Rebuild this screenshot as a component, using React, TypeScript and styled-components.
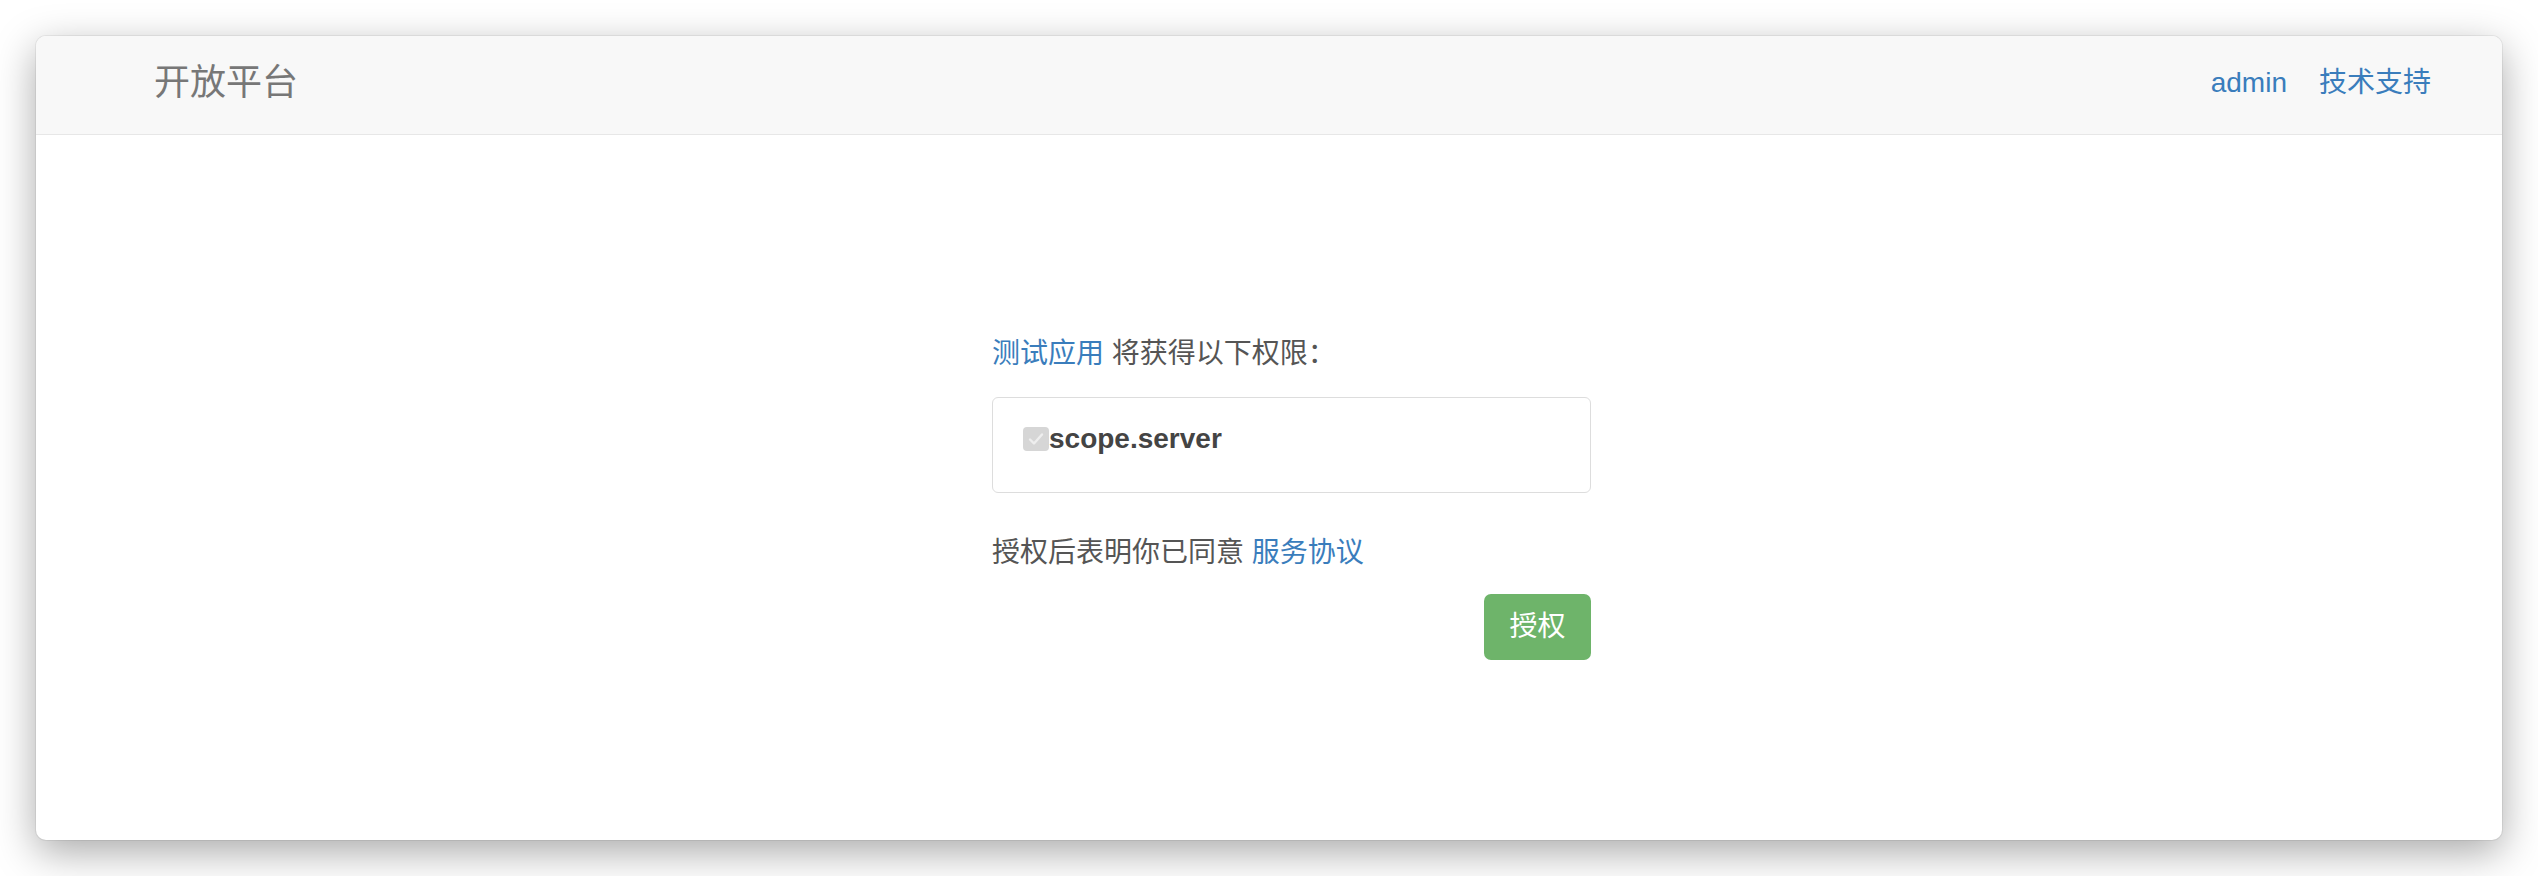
import React from "react";
import styled, { createGlobalStyle } from "styled-components";

const GlobalStyle = createGlobalStyle`
  html, body {
    margin: 0;
    padding: 0;
    background: #ffffff;
  }
  body {
    font-family: "Liberation Sans", "Noto Sans CJK SC", sans-serif;
    color: #333333;
  }
  * { box-sizing: border-box; }
`;

const Stage = styled.div`
  width: 2538px;
  height: 876px;
  padding: 36px;
  background: #ffffff;
`;

const Window = styled.div`
  width: 2466px;
  height: 804px;
  background: #ffffff;
  border-radius: 10px;
  overflow: hidden;
  box-shadow: 0 12px 40px rgba(0, 0, 0, 0.34), 0 0 0 1px rgba(0, 0, 0, 0.06);
  display: flex;
  flex-direction: column;
`;

const NavBar = styled.header`
  height: 99px;
  flex: none;
  background: #f8f8f8;
  border-bottom: 1px solid #e7e7e7;
  display: flex;
  align-items: center;
  justify-content: space-between;
  padding: 0 71px 4px 118px;
`;

const Brand = styled.div`
  font-size: 36px;
  line-height: 40px;
  color: #777777;
`;

const NavLinks = styled.nav`
  display: flex;
  align-items: center;
  gap: 32px;
`;

const Link = styled.a`
  color: #3a7dbc;
  text-decoration: none;
  font-size: 28px;
  line-height: 40px;
  cursor: pointer;
`;

const Main = styled.main`
  flex: 1;
  padding: 199px 0 0 956px;
`;

const Column = styled.section`
  width: 599px;
  display: flex;
  flex-direction: column;
`;

const Line = styled.p<{ $gap: number }>`
  margin: 0 0 ${(p) => p.$gap}px;
  font-size: 28px;
  line-height: 40px;
  color: #555555;
`;

const ScopeBox = styled.div`
  height: 96px;
  border: 1px solid #dddddd;
  border-radius: 6px;
  padding: 29px 30px 0 30px;
  margin-bottom: 40px;
`;

const ScopeItem = styled.label`
  display: flex;
  align-items: center;
  font-size: 28px;
  line-height: 24px;
  font-weight: bold;
  color: #444444;
`;

const CheckMark = styled.span`
  width: 26px;
  height: 24px;
  border-radius: 4px;
  background: #d6d6d6;
  display: inline-flex;
  align-items: center;
  justify-content: center;
  flex: none;
`;

const Actions = styled.div`
  display: flex;
  justify-content: flex-end;
  margin-top: 21px;
`;

const AuthButton = styled.button`
  width: 107px;
  height: 66px;
  border: none;
  border-radius: 7px;
  background: #6eb46a;
  color: #ffffff;
  font-family: "Liberation Sans", "Noto Sans CJK SC", sans-serif;
  font-size: 28px;
  line-height: 40px;
  cursor: pointer;
`;

export default function App() {
  return (
    <>
      <GlobalStyle />
      <Stage>
        <Window>
          <NavBar>
            <Brand>开放平台</Brand>
            <NavLinks>
              <Link>admin</Link>
              <Link>技术支持</Link>
            </NavLinks>
          </NavBar>
          <Main>
            <Column>
              <Line $gap={23}>
                <Link>测试应用</Link> 将获得以下权限：
              </Line>
              <ScopeBox>
                <ScopeItem>
                  <CheckMark>
                    <svg width="18" height="16" viewBox="0 0 18 16">
                      <path d="M3 8.5 L7 12.5 L15 3.5" fill="none" stroke="#eeeeee" strokeWidth="2.4" strokeLinecap="round" strokeLinejoin="round" />
                    </svg>
                  </CheckMark>
                  scope.server
                </ScopeItem>
              </ScopeBox>
              <Line $gap={0}>
                授权后表明你已同意 <Link>服务协议</Link>
              </Line>
              <Actions>
                <AuthButton>授权</AuthButton>
              </Actions>
            </Column>
          </Main>
        </Window>
      </Stage>
    </>
  );
}
